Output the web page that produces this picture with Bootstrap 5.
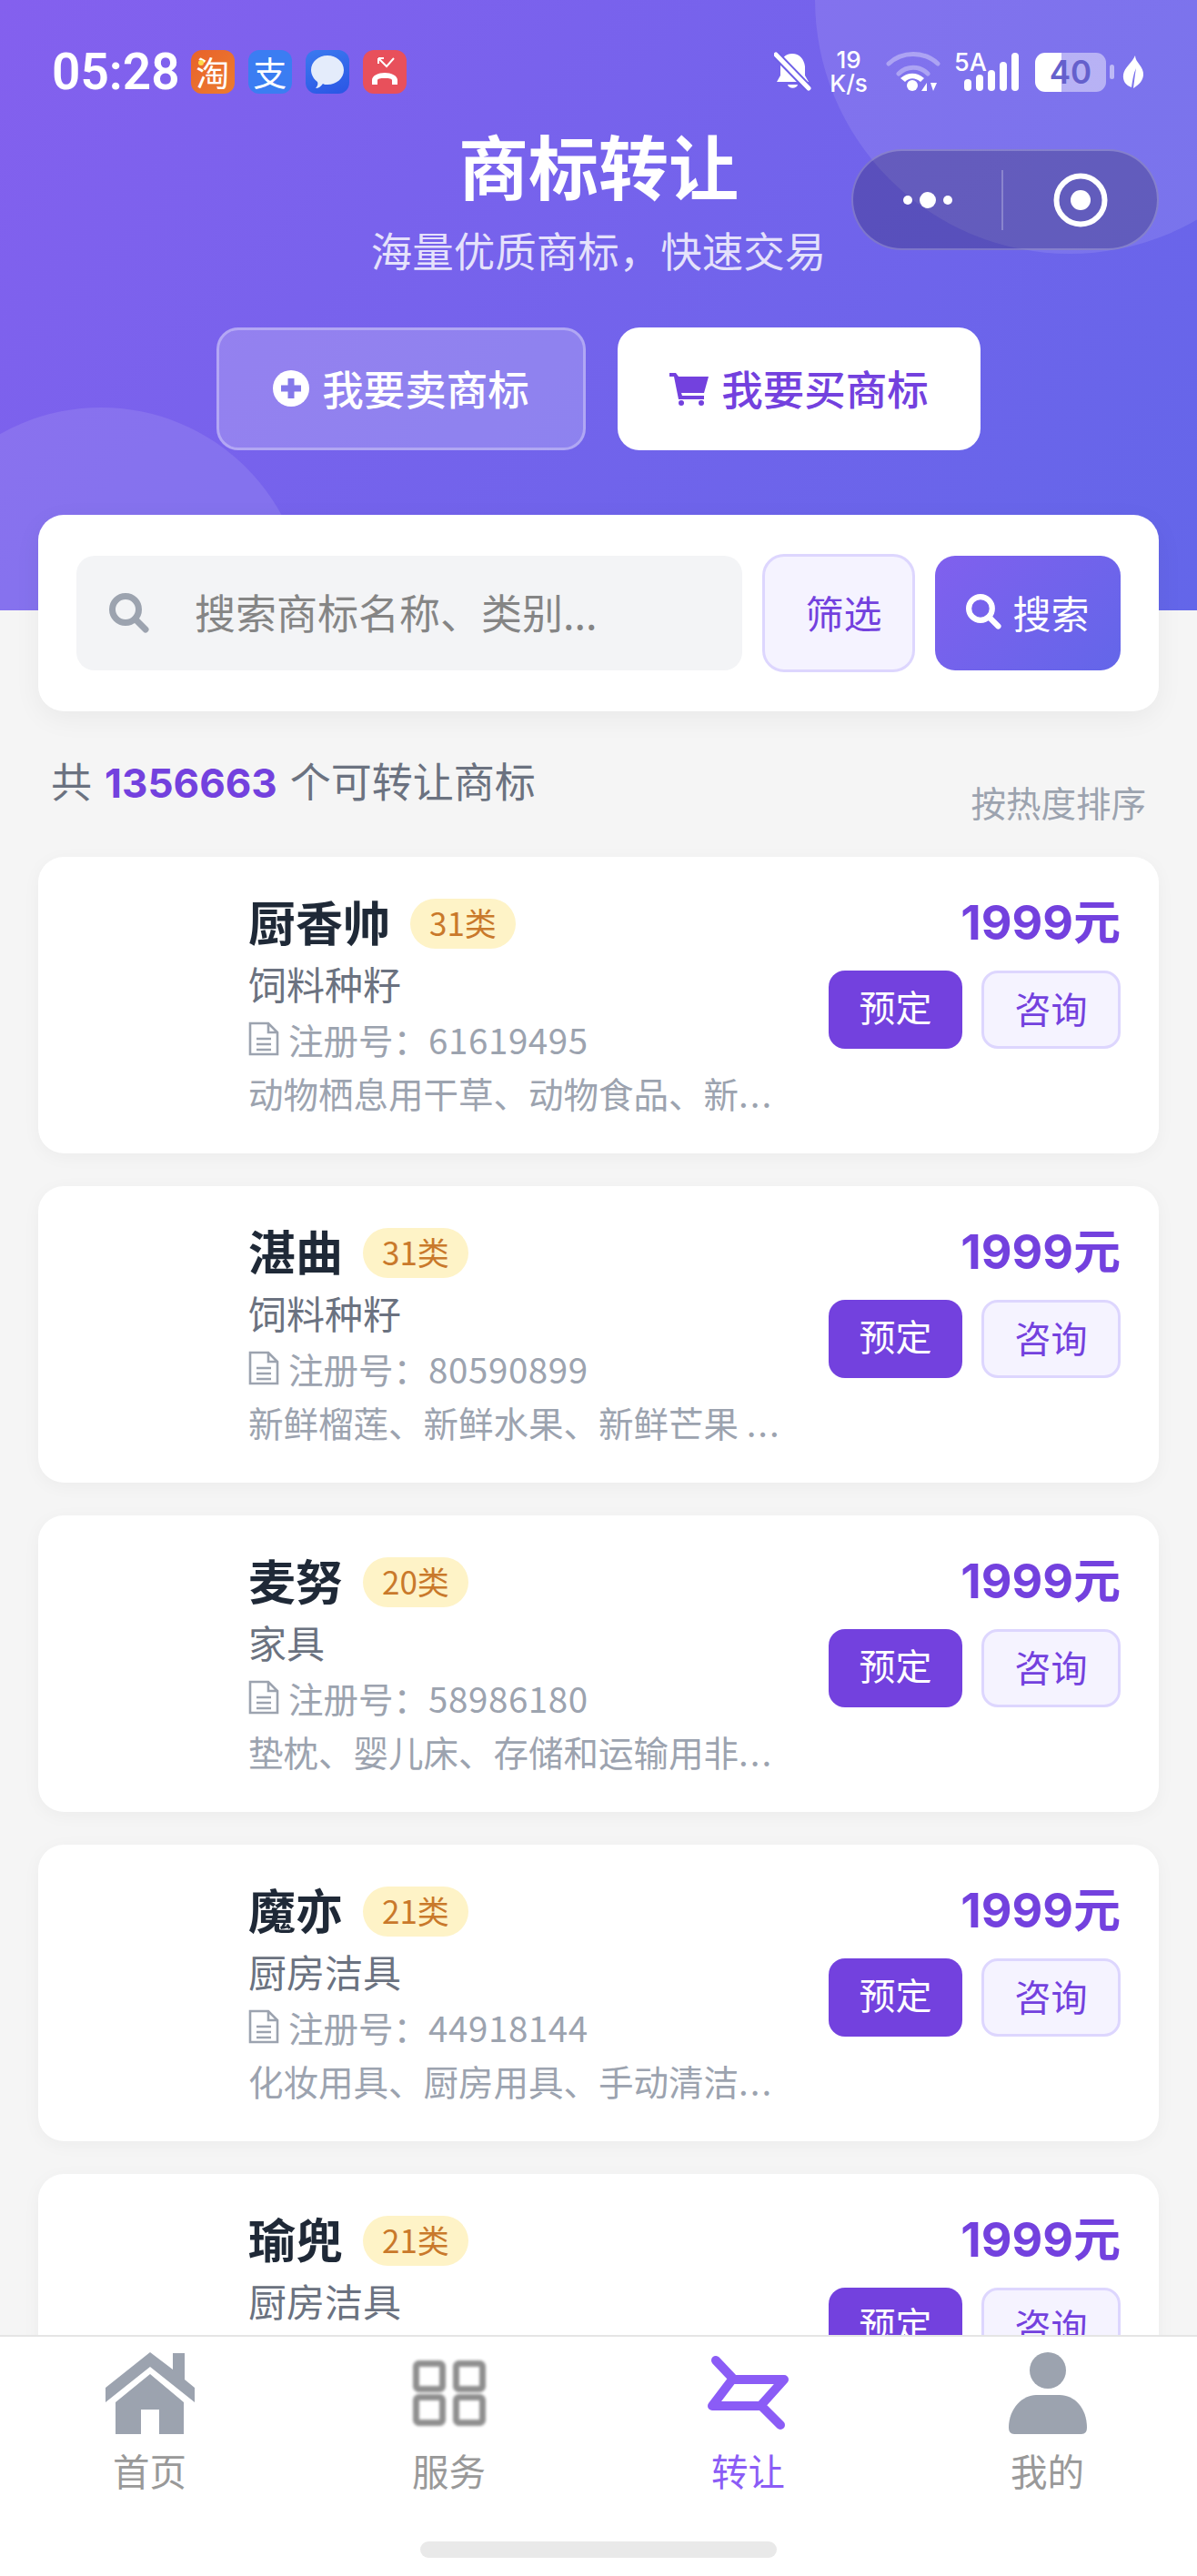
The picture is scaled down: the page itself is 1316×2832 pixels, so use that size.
<!doctype html>
<html lang="zh-CN">

<head>
    <meta charset="utf-8">
    <meta name="viewport" content="width=device-width, initial-scale=1">
    <title>商标转让</title>
    <link href="https://cdn.jsdelivr.net/npm/bootstrap@5.3.3/dist/css/bootstrap.min.css" rel="stylesheet">
    <style>
        body {
            background: #f5f5f5;
            font-family: "Noto Sans CJK SC", "Liberation Sans", sans-serif;
        }

        .latin-num {
            font-family: Inter, "Noto Sans CJK SC", sans-serif;
        }

        /* header */
        .hero {
            height: 671px;
            background: linear-gradient(135deg, #8460ee 0%, #6366e9 100%);
            color: #fff;
        }

        .deco-top {
            left: 896px;
            top: -281px;
            width: 560px;
            height: 560px;
            background: rgba(255, 255, 255, .1);
        }

        .deco-left {
            left: -115px;
            top: 448px;
            width: 452px;
            height: 452px;
            background: rgba(255, 255, 255, .1);
        }

        .status-row {
            height: 48px;
            margin-top: 55px;
            padding: 0 58px 0 57px;
        }

        .clock {
            font-family: Roboto, sans-serif;
            font-size: 55px;
            font-weight: 600;
            line-height: 48px;
            margin-right: 12px;
        }

        .app-chip {
            width: 48px;
            height: 48px;
            border-radius: 12px;
            margin-right: 15px;
            color: #fff;
            font-size: 37px;
            line-height: 1;
        }

        .chip-taobao { background: linear-gradient(135deg, #e8622b, #ec7c2e); }
        .chip-alipay { background: #3b7df2; }
        .chip-chat { background: linear-gradient(160deg, #3b7af0, #2a55e4); }
        .chip-call { background: #e8505b; }

        .chip-dot {
            width: 6px;
            height: 6px;
            left: 8px;
            top: 11px;
            background: #ffd84a;
        }

        .speed {
            font-size: 26px;
            font-weight: 500;
            line-height: 26px;
            width: 44px;
            margin: 0 19px;
        }

        .sig-label {
            font-size: 27px;
            font-weight: 500;
            line-height: 27px;
            left: 1px;
            top: -1px;
        }

        .sig-wrap {
            width: 72px;
            height: 46px;
            margin-left: 14px;
        }

        .batt-num {
            width: 78px;
            height: 43px;
            margin-left: 18px;
            border-radius: 11px;
            background: linear-gradient(90deg, #fff 37%, rgba(255, 255, 255, .45) 37%);
            font-size: 35px;
            font-weight: 600;
            color: #6560cc;
            line-height: 43px;
        }

        .capsule {
            left: 936px;
            top: 164px;
            width: 338px;
            height: 111px;
            border: 2px solid rgba(255, 255, 255, .22);
            border-radius: 56px;
            background: rgba(0, 0, 0, .2);
        }

        .capsule-line {
            width: 2px;
            height: 66px;
            background: rgba(255, 255, 255, .25);
        }

        .dot-small {
            width: 10px;
            height: 10px;
        }

        .dot-big {
            width: 18px;
            height: 18px;
        }

        .hero-title {
            font-size: 77px;
            font-weight: 700;
            line-height: 90px;
            margin: 33px 0 18px;
        }

        .hero-sub {
            font-size: 45.5px;
            line-height: 60px;
            color: rgba(255, 255, 255, .82);
        }

        .hero-actions {
            margin-top: 56px;
            gap: 35px;
            padding-left: 238px;
        }

        .btn-hero {
            height: 135px;
            padding: 0 0 2px;
            border-radius: 24px;
            font-size: 45.5px;
            font-weight: 500;
            gap: 14px;
        }

        .btn-sell {
            width: 406px;
            background: rgba(255, 255, 255, .2);
            border: 3px solid rgba(255, 255, 255, .3);
            color: #fff;
        }

        .btn-buy {
            width: 399px;
            background: #fff;
            border: 0;
            color: #7341de;
        }

        /* search */
        .search-panel {
            margin: -105px 42px 0;
            height: 216px;
            padding: 0 42px;
            gap: 22px;
            border-radius: 28px;
            box-shadow: 0 8px 30px rgba(0, 0, 0, .05);
        }

        .search-box {
            height: 126px;
            background: #f3f4f6;
            border-radius: 20px;
            padding-left: 36px;
            gap: 50px;
        }

        .search-box input {
            background: transparent;
            border: 0;
            padding: 0 0 2px;
            font-size: 45px;
            box-shadow: none;
        }

        .search-box input::placeholder {
            color: #858585;
            opacity: 1;
        }

        .btn-filter {
            width: 168px;
            height: 130px;
            padding: 0 0 4px 11px;
            background: #f5f3ff;
            border: 3px solid #ddd6fe;
            border-radius: 24px;
            color: #7341de;
            font-size: 42px;
        }

        .btn-search {
            width: 204px;
            height: 126px;
            padding: 0 0 3px;
            background: linear-gradient(135deg, #8060ee, #6366e9);
            border: 0;
            border-radius: 22px;
            color: #fff;
            font-size: 42px;
            gap: 12px;
        }

        /* list */
        .list-head {
            padding: 0 56px;
            height: 126px;
            margin-bottom: 34px;
        }

        .list-total {
            font-size: 45px;
            line-height: 60px;
            color: #6b7280;
            margin-top: 46px;
        }

        .list-total b {
            font-size: 44px;
            color: #7341de;
            font-weight: 700;
            margin: 0 4px;
        }

        .list-sort {
            font-size: 38.5px;
            line-height: 50px;
            color: #9ca3af;
            margin-top: 74px;
        }

        .tm-list {
            gap: 36px;
            margin: 0 42px;
        }

        .tm-item {
            height: 326px;
            padding: 41px 42px 0 0;
            border-radius: 28px;
            box-shadow: 0 4px 20px rgba(0, 0, 0, .04);
        }

        .tm-logo {
            width: 231px;
            flex: none;
        }

        .tm-name {
            font-size: 52px;
            font-weight: 700;
            line-height: 60px;
            color: #1f2937;
        }

        .tm-class {
            height: 55px;
            padding: 0 21px;
            margin: 4px 0 0 22px;
            border-radius: 28px;
            background: #fef3c7;
            color: #c9792b;
            font-size: 35px;
            line-height: 51px;
        }

        .tm-cat {
            font-size: 42px;
            line-height: 60px;
            color: #6b7280;
            margin-top: 8px;
        }

        .tm-reg,
        .tm-desc {
            font-size: 38.5px;
            color: #9ca3af;
        }

        .tm-reg {
            line-height: 62px;
            gap: 10px;
        }

        .reg-no {
            letter-spacing: .6px;
        }

        .tm-desc {
            line-height: 56px;
            white-space: nowrap;
        }

        .more-dots {
            letter-spacing: 2px;
        }

        .tm-price {
            font-size: 52px;
            font-weight: 700;
            line-height: 60px;
            color: #7341de;
            padding-top: 2px;
            margin-bottom: 22px;
        }

        .tm-btns {
            gap: 21px;
        }

        .btn-book,
        .btn-ask {
            height: 86px;
            border-radius: 18px;
            font-size: 40px;
            line-height: 1;
        }

        .btn-book {
            width: 147px;
            padding: 0 0 8px;
            background: #7341de;
            border: 0;
            color: #fff;
        }

        .btn-ask {
            width: 153px;
            padding: 0 0 5px;
            background: #f5f3ff;
            border: 3px solid #ddd6fe;
            color: #7341de;
        }

        /* bottom tabs */
        .tab-bar {
            height: 265px;
            border-top: 2px solid #e5e5e5;
            padding-top: 16px;
        }

        .tab-icon {
            height: 92px;
            filter: blur(.7px);
        }

        .tab-icon-soft {
            filter: blur(1.4px);
        }

        .tab-label {
            font-size: 40.5px;
            line-height: 55px;
            margin-top: 11px;
            color: #999;
        }

        .tab-on {
            color: #8b5cf6;
        }

        .home-pill {
            width: 392px;
            height: 18px;
            margin: 51px auto 0;
            background: #e9e9e9;
            border-radius: 9px;
        }
    </style>
</head>

<body class="vh-100 overflow-hidden">
    <svg class="d-none">
        <symbol id="doc" viewBox="0 0 34 38">
            <path d="M2 2H22L32 12V36H2Z M22 2V12H32 M9 19H25 M9 25H25 M9 31H25" fill="none" stroke="#9ca3af" stroke-width="2.6" />
        </symbol>
    </svg>

    <header class="hero position-relative overflow-hidden">
        <div class="deco-top position-absolute rounded-circle"></div>
        <div class="deco-left position-absolute rounded-circle"></div>

        <div class="status-row position-relative d-flex align-items-center">
            <span class="clock">05:28</span>
            <span class="app-chip chip-taobao position-relative d-flex align-items-center justify-content-center">淘<span class="chip-dot position-absolute rounded-circle"></span></span>
            <span class="app-chip chip-alipay d-flex align-items-center justify-content-center">支</span>
            <span class="app-chip chip-chat d-flex align-items-center justify-content-center">
                <svg width="38" height="38" viewBox="0 0 38 38"><path d="M19 1C29 1 37 8 37 17S29 33 19 33C17 33 15 33 14 32C12 35 9 37 6 37C8 35 9 32 8 30C4 27 1 22 1 17C1 8 9 1 19 1Z" fill="#e4ecfb" /></svg>
            </span>
            <span class="app-chip chip-call d-flex align-items-center justify-content-center">
                <svg width="34" height="34" viewBox="0 0 34 34"><path d="M10 2L19 11L27 2M10 2V8M10 2H16" fill="none" stroke="#fff" stroke-width="2" /><path d="M3 31V26C3 21 10 18 17 18S31 21 31 26V31H25V26C24 24 20 24 17 24S10 24 9 26V31Z" fill="#fff" /></svg>
            </span>

            <div class="ms-auto d-flex align-items-center">
                <svg width="41" height="44" viewBox="0 0 41 44">
                    <path d="M20 2C28 2 33 8 34 16V26L38 33H3L7 26V16C7 8 12 2 20 2ZM15 36H26C25 41 16 41 15 36Z" fill="#fff" />
                    <path d="M2 3L38 40" stroke="#6e60e6" stroke-width="9" />
                    <path d="M2 3L38 40" stroke="#fff" stroke-width="5" stroke-linecap="round" />
                </svg>
                <span class="speed text-center latin-num">19<br>K/s</span>
                <svg width="60" height="46" viewBox="0 0 60 46">
                    <path d="M3 14C18 0 42 0 57 14" fill="none" stroke="#fff" stroke-opacity=".35" stroke-width="5" stroke-linecap="round" />
                    <path d="M14 25C23 16 37 16 46 25" fill="none" stroke="#fff" stroke-opacity=".35" stroke-width="5" stroke-linecap="round" />
                    <path d="M16 30C24 23 34 23 42 30L38 34C32 29 26 29 21 34Z" fill="#fff" />
                    <circle cx="29" cy="38" r="6" fill="#fff" />
                    <path d="M39 44L45 35V44ZM49 35H56L52 44Z" fill="#fff" />
                </svg>
                <div class="sig-wrap position-relative">
                    <span class="sig-label position-absolute latin-num">5A</span>
                    <svg class="position-absolute top-0 end-0" width="60" height="46" viewBox="0 0 60 46">
                        <rect x="0" y="31" width="8" height="13" rx="4" fill="#fff" />
                        <rect x="13" y="26" width="8" height="18" rx="4" fill="#fff" />
                        <rect x="26" y="21" width="8" height="23" rx="4" fill="#fff" />
                        <rect x="39" y="12" width="8" height="32" rx="4" fill="#fff" />
                        <rect x="52" y="2" width="8" height="42" rx="4" fill="#fff" />
                    </svg>
                </div>
                <div class="batt-num text-center latin-num">40</div>
                <svg class="ms-1" width="6" height="16" viewBox="0 0 6 16"><rect width="5" height="16" rx="2.5" fill="#fff" fill-opacity=".5" /></svg>
                <svg class="ms-2" width="24" height="36" viewBox="0 0 24 36"><path d="M14 0C14 8 24 12 23 22C22 30 15 34 12 36C13 28 14 20 15 14C12 20 11 28 10 35C4 33 0 28 1 21C2 13 11 8 14 0Z" fill="#fff" /></svg>
            </div>
        </div>

        <div class="capsule position-absolute d-flex align-items-center">
            <div class="flex-fill d-flex align-items-center justify-content-center gap-2">
                <span class="dot-small rounded-circle bg-white"></span>
                <span class="dot-big rounded-circle bg-white"></span>
                <span class="dot-small rounded-circle bg-white"></span>
            </div>
            <div class="capsule-line"></div>
            <div class="flex-fill d-flex align-items-center justify-content-center">
                <svg width="60" height="60" viewBox="0 0 60 60"><circle cx="30" cy="30" r="26.5" fill="none" stroke="#fff" stroke-width="6" /><circle cx="30" cy="30" r="11" fill="#fff" /></svg>
            </div>
        </div>

        <div class="position-relative text-center">
            <h1 class="hero-title">商标转让</h1>
            <div class="hero-sub">海量优质商标，快速交易</div>
        </div>

        <div class="hero-actions position-relative d-flex">
            <button class="btn btn-hero btn-sell d-flex align-items-center justify-content-center">
                <svg width="40" height="40" viewBox="0 0 40 40"><circle cx="20" cy="20" r="20" fill="#fff" /><path d="M20 9V31M9 20H31" stroke="#8479ea" stroke-width="7" /></svg>
                我要卖商标
            </button>
            <button class="btn btn-hero btn-buy d-flex align-items-center justify-content-center">
                <svg width="43" height="38" viewBox="0 0 43 38"><path d="M0 2H7L10 6H43L38 24H13L14 27H38V31H10L5 6H0Z" fill="#7341de" /><circle cx="13" cy="35" r="3" fill="#7341de" /><circle cx="35" cy="35" r="3" fill="#7341de" /></svg>
                我要买商标
            </button>
        </div>
    </header>

    <main class="position-relative">
        <div class="search-panel bg-white d-flex align-items-center">
            <div class="search-box flex-fill d-flex align-items-center">
                <svg width="44" height="44" viewBox="0 0 44 44" class="flex-shrink-0"><circle cx="18" cy="18" r="14.5" fill="none" stroke="#9ca3af" stroke-width="7" /><path d="M29 29L40 40" stroke="#9ca3af" stroke-width="7" stroke-linecap="round" /></svg>
                <input type="text" class="form-control" placeholder="搜索商标名称、类别...">
            </div>
            <button class="btn btn-filter flex-shrink-0">筛选</button>
            <button class="btn btn-search flex-shrink-0 d-flex align-items-center justify-content-center">
                <svg width="39" height="39" viewBox="0 0 44 44"><circle cx="18" cy="18" r="14.5" fill="none" stroke="#fff" stroke-width="7" /><path d="M29 29L40 40" stroke="#fff" stroke-width="7" stroke-linecap="round" /></svg>
                搜索
            </button>
        </div>

        <div class="list-head d-flex justify-content-between align-items-start">
            <div class="list-total">共 <b class="latin-num">1356663</b> 个可转让商标</div>
            <div class="list-sort">按热度排序</div>
        </div>

        <div class="tm-list d-flex flex-column">
            <div class="tm-item bg-white d-flex">
                <div class="tm-logo"></div>
                <div class="flex-fill">
                    <div class="d-flex align-items-center"><span class="tm-name">厨香帅</span><span class="tm-class">31类</span></div>
                    <div class="tm-cat">饲料种籽</div>
                    <div class="tm-reg d-flex align-items-center"><svg width="34" height="38"><use href="#doc" /></svg><span>注册号：<span class="reg-no">61619495</span></span></div>
                    <div class="tm-desc">动物栖息用干草、动物食品、新<span class="more-dots">...</span></div>
                </div>
                <div class="text-end">
                    <div class="tm-price latin-num">1999元</div>
                    <div class="tm-btns d-flex"><button class="btn btn-book">预定</button><button class="btn btn-ask">咨询</button></div>
                </div>
            </div>
            <div class="tm-item bg-white d-flex">
                <div class="tm-logo"></div>
                <div class="flex-fill">
                    <div class="d-flex align-items-center"><span class="tm-name">湛曲</span><span class="tm-class">31类</span></div>
                    <div class="tm-cat">饲料种籽</div>
                    <div class="tm-reg d-flex align-items-center"><svg width="34" height="38"><use href="#doc" /></svg><span>注册号：<span class="reg-no">80590899</span></span></div>
                    <div class="tm-desc">新鲜榴莲、新鲜水果、新鲜芒果 <span class="more-dots">...</span></div>
                </div>
                <div class="text-end">
                    <div class="tm-price latin-num">1999元</div>
                    <div class="tm-btns d-flex"><button class="btn btn-book">预定</button><button class="btn btn-ask">咨询</button></div>
                </div>
            </div>
            <div class="tm-item bg-white d-flex">
                <div class="tm-logo"></div>
                <div class="flex-fill">
                    <div class="d-flex align-items-center"><span class="tm-name">麦努</span><span class="tm-class">20类</span></div>
                    <div class="tm-cat">家具</div>
                    <div class="tm-reg d-flex align-items-center"><svg width="34" height="38"><use href="#doc" /></svg><span>注册号：<span class="reg-no">58986180</span></span></div>
                    <div class="tm-desc">垫枕、婴儿床、存储和运输用非<span class="more-dots">...</span></div>
                </div>
                <div class="text-end">
                    <div class="tm-price latin-num">1999元</div>
                    <div class="tm-btns d-flex"><button class="btn btn-book">预定</button><button class="btn btn-ask">咨询</button></div>
                </div>
            </div>
            <div class="tm-item bg-white d-flex">
                <div class="tm-logo"></div>
                <div class="flex-fill">
                    <div class="d-flex align-items-center"><span class="tm-name">魔亦</span><span class="tm-class">21类</span></div>
                    <div class="tm-cat">厨房洁具</div>
                    <div class="tm-reg d-flex align-items-center"><svg width="34" height="38"><use href="#doc" /></svg><span>注册号：<span class="reg-no">44918144</span></span></div>
                    <div class="tm-desc">化妆用具、厨房用具、手动清洁<span class="more-dots">...</span></div>
                </div>
                <div class="text-end">
                    <div class="tm-price latin-num">1999元</div>
                    <div class="tm-btns d-flex"><button class="btn btn-book">预定</button><button class="btn btn-ask">咨询</button></div>
                </div>
            </div>
            <div class="tm-item bg-white d-flex">
                <div class="tm-logo"></div>
                <div class="flex-fill">
                    <div class="d-flex align-items-center"><span class="tm-name">瑜兜</span><span class="tm-class">21类</span></div>
                    <div class="tm-cat">厨房洁具</div>
                </div>
                <div class="text-end">
                    <div class="tm-price latin-num">1999元</div>
                    <div class="tm-btns d-flex"><button class="btn btn-book">预定</button><button class="btn btn-ask">咨询</button></div>
                </div>
            </div>
        </div>
    </main>

    <nav class="tab-bar fixed-bottom bg-white">
        <div class="d-flex">
            <div class="w-25 text-center">
                <div class="tab-icon d-flex align-items-center justify-content-center">
                    <svg width="98" height="92" viewBox="0 0 98 92"><path d="M0 40L49 1L74 20V2H87V31L98 40V56L49 17L0 56Z" fill="#9ca3af" /><path d="M49 25L86 56V91H59V64H39V91H11V56Z" fill="#9ca3af" /></svg>
                </div>
                <div class="tab-label">首页</div>
            </div>
            <div class="w-25 text-center">
                <div class="tab-icon tab-icon-soft d-flex align-items-center justify-content-center">
                    <svg width="80" height="72" viewBox="0 0 80 72" fill="none" stroke="#8f8f8f" stroke-width="7"><rect x="3.5" y="3.5" width="29" height="28" rx="3" /><rect x="47.5" y="3.5" width="29" height="28" rx="3" /><rect x="3.5" y="40.5" width="29" height="28" rx="3" /><rect x="47.5" y="40.5" width="29" height="28" rx="3" /></svg>
                </div>
                <div class="tab-label">服务</div>
            </div>
            <div class="w-25 text-center">
                <div class="tab-icon d-flex align-items-center justify-content-center">
                    <svg width="90" height="84" viewBox="0 0 90 84" fill="none" stroke="#8b5cf6" stroke-width="10" stroke-linecap="round" stroke-linejoin="round"><path d="M9 6L27 25M27 27H84L58 56H5ZM60 57L80 77" /></svg>
                </div>
                <div class="tab-label tab-on">转让</div>
            </div>
            <div class="w-25 text-center">
                <div class="tab-icon d-flex align-items-center justify-content-center">
                    <svg width="86" height="92" viewBox="0 0 86 92" fill="#9ca3af"><circle cx="43" cy="21" r="20" /><path d="M0 84C0 62 16 48 30 48H56C72 48 86 62 86 84Q86 91 80 91H6Q0 91 0 84Z" /></svg>
                </div>
                <div class="tab-label">我的</div>
            </div>
        </div>
        <div class="home-pill"></div>
    </nav>

    <script src="https://cdn.jsdelivr.net/npm/bootstrap@5.3.3/dist/js/bootstrap.bundle.min.js"></script>
</body>

</html>
